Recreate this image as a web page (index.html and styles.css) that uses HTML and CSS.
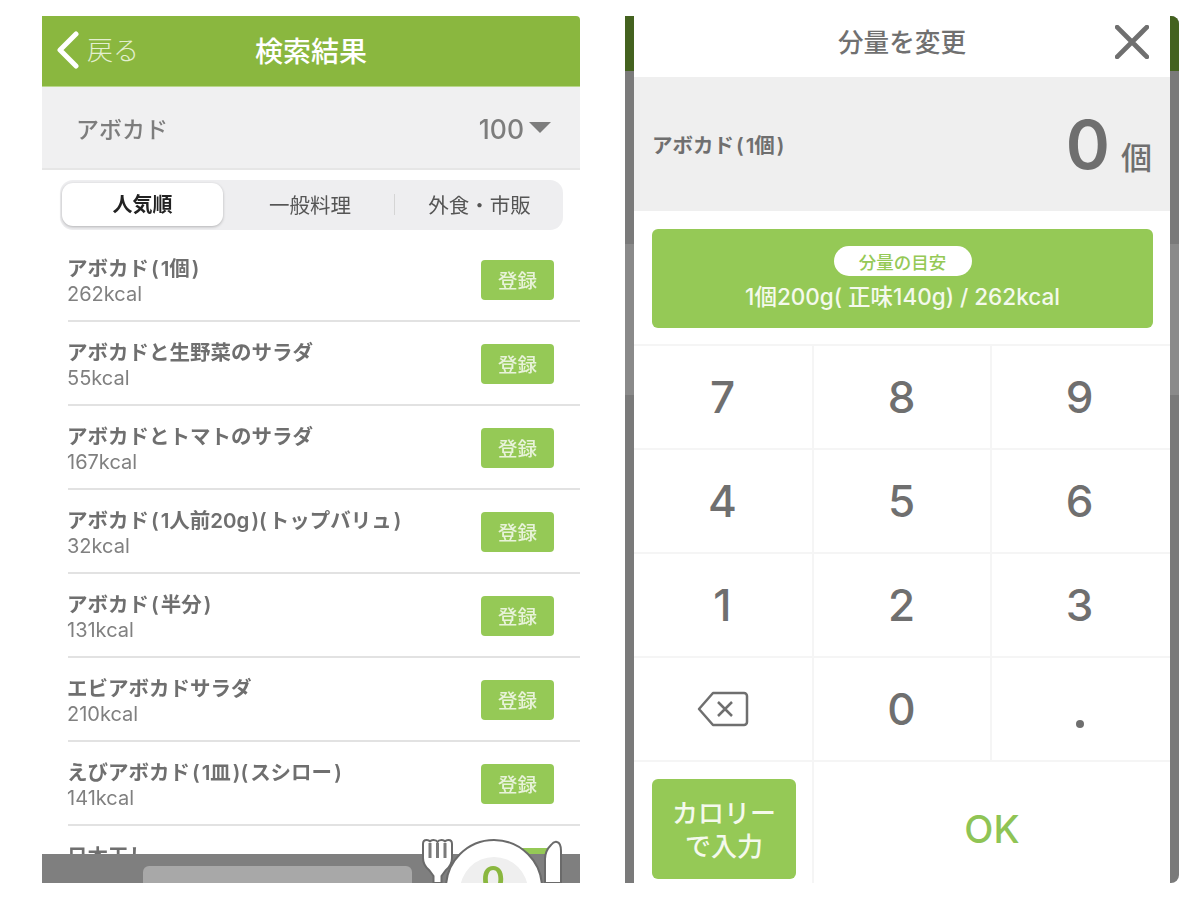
FILE: index.html
```html
<!DOCTYPE html>
<html lang="ja">
<head>
<meta charset="utf-8">
<title>検索結果</title>
<link rel="stylesheet" href="styles.css">
</head>
<body>
<div class="page">
  <section class="screen results">
    <header class="topbar">
      <div class="back">
        <svg class="chev" viewBox="0 0 24 38"><path d="M20 3 L4 19 L20 35" /></svg>
        <span>戻る</span>
      </div>
      <h1>検索結果</h1>
    </header>
    <div class="query">
      <span>アボカド</span>
      <span class="count"><span class="num">100</span><i class="caret"></i></span>
    </div>
    <div class="tabs">
      <div class="tab active">人気順</div>
      <div class="tab mid">一般料理</div>
      <div class="tab sep">外食・市販</div>
    </div>
    <ul class="list">
      <li><div><b>アボカド<span class="par">(</span>1個<span class="par">)</span></b><small>262kcal</small></div><button>登録</button></li>
      <li><div><b>アボカドと生野菜のサラダ</b><small>55kcal</small></div><button>登録</button></li>
      <li><div><b>アボカドとトマトのサラダ</b><small>167kcal</small></div><button>登録</button></li>
      <li><div><b>アボカド<span class="par">(</span>1人前20g<span class="par">)(</span>トップバリュ<span class="par">)</span></b><small>32kcal</small></div><button>登録</button></li>
      <li><div><b>アボカド<span class="par">(</span>半分<span class="par">)</span></b><small>131kcal</small></div><button>登録</button></li>
      <li><div><b>エビアボカドサラダ</b><small>210kcal</small></div><button>登録</button></li>
      <li><div><b>えびアボカド<span class="par">(</span>1皿<span class="par">)(</span>スシロー<span class="par">)</span></b><small>141kcal</small></div><button>登録</button></li>
      <li><div><b>日本干し</b><small>98kcal</small></div><button>登録</button></li>
    </ul>
    <div class="dock"><div class="dock-pill"></div></div>
    <svg class="plate" viewBox="0 0 150 50">
      <path class="cut" d="M5 11 q0 -4 3.500 -4 q3 0 3.500 2 q0.500 -2 3.500 -2 q3 0 4 2 q1 -2 4 -2 q3 0 3.500 2 q0.500 -2 3.500 -2 q3.500 0 3.500 4 v14 q0 7 -6 12 l-4.500 6 v7 h-8 v-7 l-4.500 -6 q-6 -5 -6 -12 z"/>
      <path class="tine" d="M12 10 v15 M19.500 10 v15 M27 10 v15"/>
      <circle class="dish" cx="76" cy="55" r="48"/>
      <circle class="well" cx="76" cy="58" r="34"/>
      <text class="zero" x="75" y="59" text-anchor="middle">0</text>
      <path class="cut" d="M127 50 v-24 q0 -8 6 -14 q3 -4 6 -3 q4 1 4 9 v32 z"/>
    </svg>
  </section>

  <section class="screen modal">
    <div class="sheet">
      <header class="sheet-head">
        <h2>分量を変更</h2>
        <svg class="close" viewBox="0 0 32 32"><path d="M2 2 L30 30 M30 2 L2 30"/></svg>
      </header>
      <div class="amount">
        <span class="amount-name">アボカド<span class="par">(</span>1個<span class="par">)</span></span>
        <span class="amount-val"><em>0</em><span>個</span></span>
      </div>
      <div class="hint-wrap">
        <div class="hint">
          <span class="hint-tag">分量の目安</span>
          <span class="hint-text">1個200g( 正味140g) / 262kcal</span>
        </div>
      </div>
      <div class="keys">
        <div class="key">7</div><div class="key">8</div><div class="key">9</div>
        <div class="key">4</div><div class="key">5</div><div class="key">6</div>
        <div class="key">1</div><div class="key">2</div><div class="key">3</div>
        <div class="key">
          <svg class="bksp" viewBox="0 0 52 36"><path class="b1" d="M16 2 H47 a3 3 0 0 1 3 3 V31 a3 3 0 0 1 -3 3 H16 L2 18 Z"/><path class="b2" d="M21 11 L35 25 M35 11 L21 25"/></svg>
        </div>
        <div class="key">0</div>
        <div class="key dot"><i></i></div>
      </div>
      <div class="foot">
        <div class="foot-left"><div class="cal">カロリー<br>で入力</div></div>
        <div class="ok">OK</div>
      </div>
    </div>
  </section>
</div>
</body>
</html>
```
FILE: styles.css
```css
* { box-sizing: border-box; margin: 0; padding: 0; }
html, body { background: #fff; }
body { font-family: "Inter", "Noto Sans CJK JP", sans-serif; color: #6f6f6f; height: 900px; overflow: hidden; }
.page { display: flex; gap: 45px; padding: 16px 0 0 42px; height: 883px; filter: blur(0.6px); }
.screen { position: relative; overflow: hidden; height: 867px; }
.par { padding: 0 2px; }

.results { width: 538px; border-top-right-radius: 4px; }
.topbar { background: #8ab73f; color: #fff; display: flex; align-items: center; justify-content: center; position: relative; border-bottom: 1px solid #b9d78b; height: 71px; padding-bottom: 2px; }
.topbar h1 { font-size: 28px; font-weight: 500; }
.back { position: absolute; left: 14px; top: 15px; display: flex; align-items: center; gap: 7px; font-size: 26px; font-weight: 300; color: #e3efd0; }
.back span { margin-top: -3px; }
.chev { width: 24px; height: 38px; fill: none; stroke: #fff; stroke-width: 5; stroke-linecap: round; stroke-linejoin: round; }
.query { height: 83px; background: #f0f0f1; border-bottom: 2px solid #e6e6e6; display: flex; align-items: center; justify-content: space-between; padding: 0 29px 0 34px; font-size: 23px; font-weight: 500; color: #7d7d7d; }
.count { display: flex; align-items: center; gap: 5px; font-size: 26.500px; font-weight: 500; }
.num { margin-top: 2px; }
.caret { width: 0; height: 0; border-left: 11px solid transparent; border-right: 11px solid transparent; border-top: 11px solid #7d7d7d; }
.tabs { margin: 10px 17px 0 18px; height: 50px; background: #eeeef0; border-radius: 13px; display: flex; align-items: center; padding: 3px 4px 4px 2px; color: #555; font-size: 20.500px; }
.tab { flex: 1; text-align: center; height: 100%; display: flex; align-items: center; justify-content: center; position: relative; padding-bottom: 2px; }
.tab.active { flex: none; width: 161px; background: #fff; border-radius: 11px; box-shadow: 0 1px 3px rgba(0,0,0,.25); color: #222; font-weight: 700; font-size: 20px; }
.tab.mid { flex: none; width: 171px; padding-left: 3px; }
.tab.sep { padding-left: 6px; }
.tab.sep::before { content: ""; position: absolute; left: 0; top: 11px; bottom: 11px; width: 1px; background: #d5d5d5; }
.list { list-style: none; margin-top: 8px; padding-left: 26px; }
.list li { height: 84px; border-bottom: 2px solid #e2e2e2; display: flex; align-items: center; justify-content: space-between; padding: 2px 26px 0 0; }
.list li > div { margin: 2px 0 0 -1px; }
.list b { display: block; font-size: 20.500px; font-weight: 600; line-height: 27px; color: #6f6f6f; }
.list small { display: block; font-size: 20px; line-height: 25px; color: #808080; }
.list button { width: 73px; height: 40px; border: 0; border-radius: 4px; background: #95c956; color: #e8f3d9; font: 500 19.500px "Noto Sans CJK JP", sans-serif; padding-bottom: 2px; }
.dock { position: absolute; left: 0; right: 0; bottom: 0; height: 29px; background: #7f7f7f; }
.dock-pill { position: absolute; left: 101px; top: 12px; width: 269px; height: 30px; background: #a8a8a8; border-radius: 6px; }
.plate { position: absolute; left: 376px; bottom: 0; width: 150px; height: 50px; overflow: hidden; }
.cut { fill: #fff; stroke: #6a6a6a; stroke-width: 2; }
.tine { fill: none; stroke: #7a7a7a; stroke-width: 3; }
.dish { fill: #fff; stroke: #6a6a6a; stroke-width: 2; }
.well { fill: #efefef; }
.zero { font: 600 36px "Inter", sans-serif; fill: #8ab73f; }

.modal { width: 554px; background: linear-gradient(#7a7a7a 228px, #8a8a8a 228px, #8a8a8a 379px, #7a7a7a 379px); padding: 0 9px; border-bottom-right-radius: 8px; border-top-right-radius: 8px; }
.modal::before { content: ""; position: absolute; left: 0; right: 0; top: 0; height: 55px; background: #44621f; }
.sheet { position: relative; background: #fff; height: 100%; display: flex; flex-direction: column; }
.sheet-head { height: 61px; display: flex; align-items: center; justify-content: center; position: relative; }
.sheet-head h2 { font-size: 25.600px; font-weight: 500; color: #707070; margin-top: -12px; }
.close { position: absolute; right: 21px; top: 9px; width: 34px; height: 34px; fill: none; stroke: #6f6f6f; stroke-width: 4.500; stroke-linecap: round; }
.amount { height: 134px; background: #efefef; display: flex; align-items: center; justify-content: space-between; padding: 0 18px; }
.amount-name { font-size: 20.500px; font-weight: 600; color: #6f6f6f; }
.amount-val { display: flex; align-items: baseline; gap: 11px; color: #6f6f6f; }
.amount-val em { font-style: normal; font-size: 67px; font-weight: 600; line-height: 1; }
.amount-val span { font-size: 31px; font-weight: 500; }
.hint-wrap { padding: 18px 17px 16px 18px; border-bottom: 2px solid #f5f5f5; }
.hint { height: 99px; background: #95c956; border-radius: 6px; display: flex; flex-direction: column; align-items: center; gap: 6px; padding-top: 17px; color: #fff; }
.hint-tag { width: 138px; height: 30px; background: #fff; border-radius: 15px; color: #95c956; font-size: 17.500px; font-weight: 500; display: flex; align-items: center; justify-content: center; }
.hint-text { font-size: 22.500px; line-height: 29px; font-weight: 500; color: #f4f9ec; }
.keys { display: grid; grid-template-columns: 180px 178px 178px; grid-auto-rows: 104px; }
.key { display: flex; align-items: center; justify-content: center; font-size: 44px; font-weight: 500; color: #6f6f6f; border-right: 2px solid #f5f5f5; border-bottom: 2px solid #f5f5f5; padding-right: 1px; }
.key:nth-child(3n) { border-right: 0; padding-right: 3px; }
.bksp { width: 52px; height: 36px; fill: none; }
.b1 { stroke: #6f6f6f; stroke-width: 2.500; stroke-linejoin: round; }
.b2 { stroke: #6f6f6f; stroke-width: 2.500; }
.dot i { width: 8px; height: 8px; border-radius: 50%; background: #6f6f6f; margin-top: 30px; }
.foot { flex: 1; display: flex; }
.foot-left { width: 180px; border-right: 2px solid #f5f5f5; padding: 17px 0 0 18px; }
.cal { width: 144px; height: 100px; background: #95c956; border-radius: 6px; color: #f4f9ec; font-size: 26px; font-weight: 500; line-height: 33px; text-align: center; padding-top: 18px; }
.ok { flex: 1; display: flex; align-items: center; justify-content: center; font-size: 38px; font-weight: 500; color: #8fc455; padding-top: 12px; }
```
